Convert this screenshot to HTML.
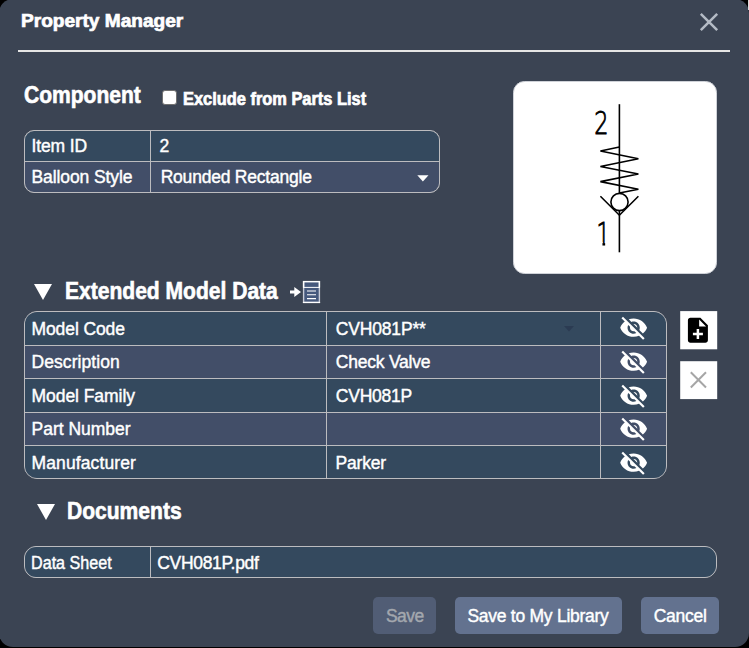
<!DOCTYPE html>
<html lang="en">
<head>
<meta charset="utf-8">
<title>Property Manager</title>
<style>
html,body{margin:0;padding:0;}
body{width:749px;height:648px;overflow:hidden;background:#000;position:relative;
  font-family:"Liberation Sans",sans-serif;color:#fff;}
#dlg{position:absolute;left:-1.4px;top:-1.4px;width:750.4px;height:648.6px;border-radius:14px;background:#3b4453;}
#strip{position:absolute;left:747.6px;top:0;width:1.4px;height:9.5px;background:#dadada;}
.t{position:absolute;white-space:nowrap;line-height:20px;height:20px;font-size:17.5px;color:#fff;-webkit-text-stroke-width:0.42px;}
.b{font-weight:bold;-webkit-text-stroke-width:0.7px;}
.h{font-size:22.5px;font-weight:bold;line-height:26px;height:26px;-webkit-text-stroke-width:0.6px;}
#sep{position:absolute;left:18px;top:50px;width:712px;height:2px;background:#e6e6e5;}
.tbl{position:absolute;border:1px solid #bcbcbf;box-sizing:border-box;overflow:hidden;background:#bcbcbf;}
.c{position:absolute;}
.d{background:#34495e;}
.l{background:#424e68;}
#img{position:absolute;left:513.1px;top:80.8px;width:203.8px;height:193px;background:#fff;border-radius:11.5px;box-sizing:border-box;border:1px solid #cfd2d8;}
.wb{position:absolute;left:680.5px;width:36.7px;height:37px;background:#fff;}
.btn{position:absolute;top:597px;height:37px;border-radius:5px;background:#63728f;}
svg{position:absolute;overflow:visible;}
</style>
</head>
<body>
<div id="dlg"></div>
<div id="strip"></div>

<div class="t b" id="title" style="left:20.5px;top:11.2px;font-size:18.3px;transform:scaleX(1.044);transform-origin:0 0;">Property Manager</div>
<svg id="closex" style="left:699px;top:12px" width="20" height="20" viewBox="0 0 20 20"><path d="M1.8 1.8 L18.2 18.2 M18.2 1.8 L1.8 18.2" stroke="#b4bbc5" stroke-width="2.5" fill="none"/></svg>
<div id="sep"></div>

<div class="t h" id="hcomp" style="left:24.1px;top:81.6px;transform:scaleX(0.914);transform-origin:0 0;font-size:23px;">Component</div>
<div id="cb" style="position:absolute;left:162.1px;top:89.9px;width:14.8px;height:14.9px;box-sizing:border-box;background:#fff;border:1px solid #707070;border-radius:3px;"></div>
<div class="t b" id="excl" style="left:183.1px;top:89.1px;transform:scaleX(0.932);transform-origin:0 0;font-size:17.6px;">Exclude from Parts List</div>

<!-- table 1 -->
<div class="tbl" id="t1" style="left:24px;top:130px;width:416px;height:63px;border-radius:10px;">
  <div class="c d" style="left:0;top:0;width:125px;height:30px;"></div>
  <div class="c d" style="left:126px;top:0;width:288px;height:30px;"></div>
  <div class="c l" style="left:0;top:31px;width:125px;height:30px;"></div>
  <div class="c l" style="left:126px;top:31px;width:288px;height:30px;"></div>
</div>
<div class="t" id="a1" style="left:31.4px;top:136px;letter-spacing:-0.10px;">Item ID</div>
<div class="t" id="a2" style="left:159.5px;top:136px;letter-spacing:-0.10px;">2</div>
<div class="t" id="a3" style="left:31.5px;top:167.0px;letter-spacing:-0.10px;">Balloon Style</div>
<div class="t" id="a4" style="left:160.7px;top:167.0px;letter-spacing:-0.22px;">Rounded Rectangle</div>
<svg style="left:417px;top:175px" width="12" height="7" viewBox="0 0 12 7"><path d="M0.3 0.3 H11.5 L5.9 6.5 Z" fill="#fff"/></svg>

<div id="img"></div>
<svg id="sym" style="left:513px;top:81px" width="204" height="192" viewBox="513 81 204 192">
  <g fill="none" stroke="#000" stroke-width="1.6" stroke-linejoin="miter" stroke-linecap="butt">
    <path d="M619.4 104.2 V193"/>
    <path d="M619.4 147 L600.4 151 L638.4 158.8 L600.4 166.5 L638.4 174 L600.4 181.6 L638.4 189.3 L619.4 193"/>
    <circle cx="619.5" cy="202" r="8.6"/>
    <path d="M600.4 196.2 L619.4 215.2 L638.4 196.2"/>
    <path d="M619.4 210.6 V252.3"/>
  </g>
  <text x="0" y="0" transform="translate(594.2 134.4) scale(0.7 1)" font-family="DejaVu Sans, Liberation Sans, sans-serif" font-weight="200" font-size="32" fill="#000" stroke="#000" stroke-width="1">2</text>
  <text x="0" y="0" transform="translate(596.4 244.6) scale(0.67 1)" font-family="DejaVu Sans, Liberation Sans, sans-serif" font-weight="200" font-size="32" fill="#000" stroke="#000" stroke-width="1">1</text>
  <path d="M594 242 H602.45 V247 H594 Z M605.15 242 H612 V247 H605.150 Z" fill="#fff"/>
</svg>

<!-- Extended Model Data -->
<svg style="left:34px;top:284px" width="18" height="16" viewBox="0 0 18 16"><path d="M0 0 H18 L9 16 Z" fill="#fff"/></svg>
<div class="t h" id="hext" style="left:64.8px;top:278.3px;transform:scaleX(0.915);transform-origin:0 0;font-size:23px;">Extended Model Data</div>
<svg id="imp" style="left:289px;top:280px" width="32" height="24" viewBox="289 280 32 24">
  <path d="M290 290.6 H294.3 V287 L301 292 L294.3 297 V293.4 H290 Z" fill="#fff"/>
  <rect x="303.6" y="281.6" width="15.8" height="20.8" fill="#46597d" stroke="#c9cdd8" stroke-width="1.4"/>
  <path d="M302.9 281.6 H320.1 M303.6 281 V287.5 M319.4 281 V287.5" stroke="#fff" stroke-width="1.4" fill="none"/>
  <path d="M302.9 302.45 H320.1" stroke="#fff" stroke-width="1.2" fill="none"/>
  <path d="M303 287.4 H320" stroke="#fff" stroke-width="1" fill="none"/>
  <path d="M307 291 H316 M307 294.8 H316 M307 298.6 H316" stroke="#fff" stroke-width="1.1" fill="none"/>
</svg>

<div class="tbl" id="t2" style="left:24px;top:311px;width:643px;height:168px;border-radius:13px;">
  <div class="c d" style="left:0;top:0;width:301.1px;height:33px;"></div><div class="c d" style="left:302.1px;top:0;width:273px;height:33px;"></div><div class="c d" style="left:576.1px;top:0;width:70px;height:33px;"></div>
  <div class="c l" style="left:0;top:34px;width:301.1px;height:32.4px;"></div><div class="c l" style="left:302.1px;top:34px;width:273px;height:32.4px;"></div><div class="c l" style="left:576.1px;top:34px;width:70px;height:32.4px;"></div>
  <div class="c d" style="left:0;top:67.4px;width:301.1px;height:32.4px;"></div><div class="c d" style="left:302.1px;top:67.4px;width:273px;height:32.4px;"></div><div class="c d" style="left:576.1px;top:67.4px;width:70px;height:32.4px;"></div>
  <div class="c l" style="left:0;top:100.8px;width:301.1px;height:32.4px;"></div><div class="c l" style="left:302.1px;top:100.8px;width:273px;height:32.4px;"></div><div class="c l" style="left:576.1px;top:100.8px;width:70px;height:32.4px;"></div>
  <div class="c d" style="left:0;top:134.2px;width:301.1px;height:33px;"></div><div class="c d" style="left:302.1px;top:134.2px;width:273px;height:33px;"></div><div class="c d" style="left:576.1px;top:134.2px;width:70px;height:33px;"></div>
</div>
<div class="t" id="m1" style="left:31.5px;top:319.2px;letter-spacing:-0.10px;">Model Code</div>
<div class="t" id="m2" style="left:31.5px;top:352px;letter-spacing:0.07px;">Description</div>
<div class="t" id="m3" style="left:31.5px;top:386.2px;letter-spacing:-0.05px;">Model Family</div>
<div class="t" id="m4" style="left:31.5px;top:419.2px;letter-spacing:-0.01px;">Part Number</div>
<div class="t" id="m5" style="left:31.5px;top:452.8px;letter-spacing:0.12px;">Manufacturer</div>
<div class="t" id="v1" style="left:335.8px;top:319.2px;letter-spacing:-0.17px;">CVH081P**</div>
<div class="t" id="v2" style="left:335.8px;top:352px;letter-spacing:-0.22px;">Check Valve</div>
<div class="t" id="v3" style="left:335.8px;top:386.2px;letter-spacing:-0.23px;">CVH081P</div>
<div class="t" id="v5" style="left:335.5px;top:452.8px;letter-spacing:-0.20px;">Parker</div>
<svg style="left:564px;top:326px" width="10" height="6" viewBox="0 0 10 6"><path d="M0 0 H10 L5 5.6 Z" fill="#2b3b52"/></svg>

<svg class="eye" style="left:619px;top:313.4px" width="29.3" height="29.3" viewBox="0 0 24 24"><path fill="#fff" d="M12 7c2.76 0 5 2.24 5 5 0 .65-.13 1.26-.36 1.83l2.92 2.92c1.51-1.26 2.7-2.89 3.43-4.75-1.73-4.39-6-7.5-11-7.5-1.4 0-2.74.25-3.98.7l2.16 2.16C10.74 7.13 11.35 7 12 7zM2 4.27l2.28 2.28.46.46C3.08 8.3 1.78 10.02 1 12c1.73 4.39 6 7.5 11 7.5 1.55 0 3.03-.3 4.38-.84l.42.42L19.73 22 21 20.73 3.27 3 2 4.27zM7.53 9.8l1.55 1.55c-.05.21-.08.43-.08.65 0 1.66 1.34 3 3 3 .22 0 .44-.03.65-.08l1.55 1.55c-.67.33-1.41.53-2.2.53-2.76 0-5-2.24-5-5 0-.79.2-1.53.53-2.2zm4.31-.78l3.15 3.15.02-.16c0-1.66-1.34-3-3-3l-.17.01z"/></svg>
<svg class="eye" style="left:619px;top:346.8px" width="29.3" height="29.3" viewBox="0 0 24 24"><path fill="#fff" d="M12 7c2.76 0 5 2.24 5 5 0 .65-.13 1.26-.36 1.83l2.92 2.92c1.51-1.26 2.7-2.89 3.43-4.75-1.73-4.39-6-7.5-11-7.5-1.4 0-2.74.25-3.98.7l2.16 2.16C10.74 7.13 11.35 7 12 7zM2 4.27l2.28 2.28.46.46C3.08 8.3 1.78 10.02 1 12c1.73 4.39 6 7.5 11 7.5 1.55 0 3.03-.3 4.38-.84l.42.42L19.73 22 21 20.73 3.27 3 2 4.27zM7.53 9.8l1.55 1.55c-.05.21-.08.43-.08.65 0 1.66 1.34 3 3 3 .22 0 .44-.03.65-.08l1.55 1.55c-.67.33-1.41.53-2.2.53-2.76 0-5-2.24-5-5 0-.79.2-1.53.53-2.2zm4.31-.78l3.15 3.15.02-.16c0-1.66-1.34-3-3-3l-.17.01z"/></svg>
<svg class="eye" style="left:619px;top:380.7px" width="29.3" height="29.3" viewBox="0 0 24 24"><path fill="#fff" d="M12 7c2.76 0 5 2.24 5 5 0 .65-.13 1.26-.36 1.83l2.92 2.92c1.51-1.26 2.7-2.89 3.43-4.75-1.73-4.39-6-7.5-11-7.5-1.4 0-2.74.25-3.98.7l2.16 2.16C10.74 7.13 11.35 7 12 7zM2 4.27l2.28 2.28.46.46C3.08 8.3 1.78 10.02 1 12c1.73 4.39 6 7.5 11 7.5 1.55 0 3.03-.3 4.38-.84l.42.42L19.73 22 21 20.73 3.27 3 2 4.27zM7.53 9.8l1.55 1.55c-.05.21-.08.43-.08.65 0 1.66 1.34 3 3 3 .22 0 .44-.03.65-.08l1.55 1.55c-.67.33-1.41.53-2.2.53-2.76 0-5-2.24-5-5 0-.79.2-1.53.53-2.2zm4.31-.78l3.15 3.15.02-.16c0-1.66-1.34-3-3-3l-.17.01z"/></svg>
<svg class="eye" style="left:619px;top:413.6px" width="29.3" height="29.3" viewBox="0 0 24 24"><path fill="#fff" d="M12 7c2.76 0 5 2.24 5 5 0 .65-.13 1.26-.36 1.83l2.92 2.92c1.51-1.26 2.7-2.89 3.43-4.75-1.73-4.39-6-7.5-11-7.5-1.4 0-2.74.25-3.98.7l2.16 2.16C10.74 7.13 11.35 7 12 7zM2 4.27l2.28 2.28.46.46C3.08 8.3 1.78 10.02 1 12c1.73 4.39 6 7.5 11 7.5 1.55 0 3.03-.3 4.38-.84l.42.42L19.73 22 21 20.73 3.27 3 2 4.27zM7.53 9.8l1.55 1.55c-.05.21-.08.43-.08.65 0 1.66 1.34 3 3 3 .22 0 .44-.03.65-.08l1.55 1.55c-.67.33-1.41.53-2.2.53-2.76 0-5-2.24-5-5 0-.79.2-1.53.53-2.2zm4.31-.78l3.15 3.15.02-.16c0-1.66-1.34-3-3-3l-.17.01z"/></svg>
<svg class="eye" style="left:619px;top:447.5px" width="29.3" height="29.3" viewBox="0 0 24 24"><path fill="#fff" d="M12 7c2.76 0 5 2.24 5 5 0 .65-.13 1.26-.36 1.83l2.92 2.92c1.51-1.26 2.7-2.89 3.43-4.75-1.73-4.39-6-7.5-11-7.5-1.4 0-2.74.25-3.98.7l2.16 2.16C10.74 7.13 11.35 7 12 7zM2 4.27l2.28 2.28.46.46C3.08 8.3 1.78 10.02 1 12c1.73 4.39 6 7.5 11 7.5 1.55 0 3.03-.3 4.38-.84l.42.42L19.73 22 21 20.73 3.27 3 2 4.27zM7.53 9.8l1.55 1.55c-.05.21-.08.43-.08.65 0 1.66 1.34 3 3 3 .22 0 .44-.03.65-.08l1.55 1.55c-.67.33-1.41.53-2.2.53-2.76 0-5-2.24-5-5 0-.79.2-1.53.53-2.2zm4.31-.78l3.15 3.15.02-.16c0-1.66-1.34-3-3-3l-.17.01z"/></svg>

<svg id="sidebtns" style="left:678px;top:309px" width="42" height="92" viewBox="678 309 42 92">
  <rect x="680.2" y="311.1" width="37" height="38.2" fill="#fff"/>
  <path transform="translate(682.9 315.2) scale(1.25)" fill="#000" d="M14 2H6c-1.1 0-1.990.9-1.990 2L4 20c0 1.100.89 2 1.990 2H18c1.100 0 2-.9 2-2V8l-6-6zm2 14h-3v3h-2v-3H8v-2h3v-3h2v3h3v2zm-3-7V3.500L18.500 9H13z"/>
  <rect x="680.2" y="361.200" width="37" height="37.9" fill="#fff"/>
  <path d="M690.8 372.3 L706 387.500 M706 372.300 L690.8 387.500" stroke="#a6a6a6" stroke-width="2" fill="none"/>
</svg>

<!-- Documents -->
<svg style="left:37px;top:504px" width="18" height="16" viewBox="0 0 18 16"><path d="M0 0 H18 L9 16 Z" fill="#fff"/></svg>
<div class="t h" id="hdoc" style="left:66.8px;top:498px;transform:scaleX(0.915);transform-origin:0 0;font-size:23px;">Documents</div>
<div class="tbl" id="t3" style="left:24px;top:546px;width:693px;height:32px;border-radius:12px;">
  <div class="c d" style="left:0;top:0;width:125px;height:30px;"></div>
  <div class="c d" style="left:126px;top:0;width:570px;height:30px;"></div>
</div>
<div class="t" id="d1" style="left:31.1px;top:553px;transform:scaleX(0.922);transform-origin:0 0;">Data Sheet</div>
<div class="t" id="d2" style="left:157.2px;top:553px;letter-spacing:-0.31px;">CVH081P.pdf</div>

<div class="btn" style="left:373px;width:63px;background:#515d75;"></div>
<div class="t" id="b1" style="left:386.0px;top:605.9px;color:#a3a7ae;letter-spacing:-0.55px;">Save</div>
<div class="btn" style="left:455px;width:167px;"></div>
<div class="t" id="b2" style="left:467.4px;top:605.9px;letter-spacing:-0.26px;">Save to My Library</div>
<div class="btn" style="left:641px;width:78px;"></div>
<div class="t" id="b3" style="left:653.7px;top:605.9px;letter-spacing:-0.27px;">Cancel</div>
</body>
</html>
